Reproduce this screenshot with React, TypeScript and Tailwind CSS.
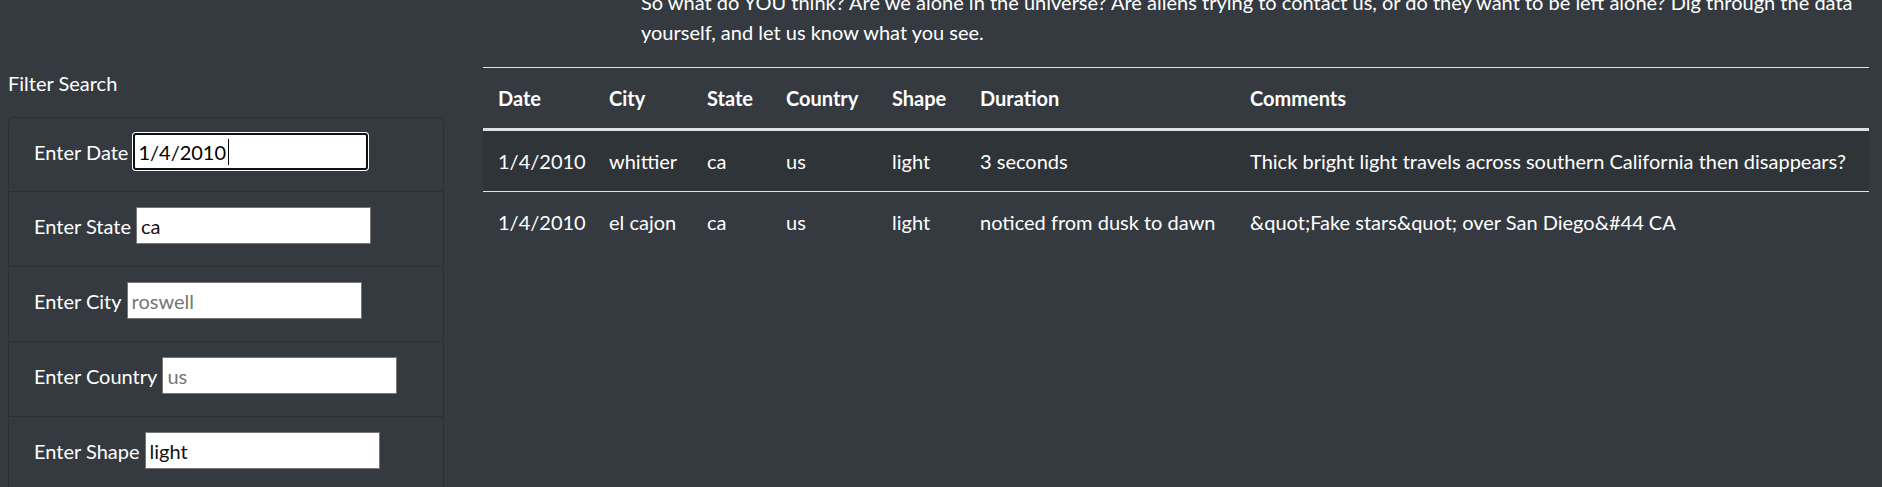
import React from "react";

const FONT = { fontFamily: "Lato, 'Noto Sans', sans-serif" };

type Field = { label: string; value?: string; placeholder?: string; focused?: boolean };

const fields: Field[] = [
  { label: "Enter Date", value: "1/4/2010", focused: true },
  { label: "Enter State", value: "ca" },
  { label: "Enter City", placeholder: "roswell" },
  { label: "Enter Country", placeholder: "us" },
  { label: "Enter Shape", value: "light" },
];

const rows = [
  ["1/4/2010", "whittier", "ca", "us", "light", "3 seconds", "Thick bright light travels across southern California then disappears?"],
  ["1/4/2010", "el cajon", "ca", "us", "light", "noticed from dusk to dawn", "&quot;Fake stars&quot; over San Diego&#44 CA"],
];

const headers = ["Date", "City", "State", "Country", "Shape", "Duration", "Comments"];
const widths = [111, 98, 79, 106, 88, 270, 634];

export default function App() {
  return (
    <div
      className="w-[1882px] h-[487px] overflow-hidden bg-[#343a40] text-white text-[20px] leading-[30px]"
      style={FONT}
    >
      <div className="flex">
        {/* Left column */}
        <div className="w-[483px] pl-[8px] pt-[68px]">
          <div className="h-[30px]">Filter Search</div>
          <div className="mt-[19px] w-[436px] border border-[#2b3035] rounded-[5px] divide-y divide-[#2b3035]">
            {fields.map((f) => (
              <div key={f.label} className="h-[75px] first:h-[74px] px-[25px] pt-[15px] flex items-start">
                <div className="flex items-center gap-[5px] h-[37px]">
                  <span className="whitespace-nowrap">{f.label}</span>
                  <div className="relative">
                    <input
                      readOnly
                      defaultValue={f.value}
                      placeholder={f.placeholder}
                      className={
                        f.focused
                          ? "block w-[235px] h-[37px] bg-white text-black border-2 border-[#101010] rounded-[3px] ring-1 ring-white px-[3px] text-[20px] outline-none placeholder:text-[#757575]"
                          : "block w-[235px] h-[37px] bg-white text-[#111] border border-[#767676] px-[4px] text-[20px] outline-none placeholder:text-[#757575]"
                      }
                      style={FONT}
                    />
                    {f.focused && (
                      <span className="absolute left-[95px] top-[6px] h-[26px] w-[1px] bg-black" />
                    )}
                  </div>
                </div>
              </div>
            ))}
          </div>
        </div>

        {/* Right column */}
        <div className="w-[1386px]">
          <p className="-mt-[13px] mb-[20px] ml-[158px] whitespace-nowrap">
            So what do YOU think? Are we alone in the universe? Are aliens trying to contact us, or do they want to be left alone? Dig through the data
            <br />
            yourself, and let us know what you see.
          </p>
          <table className="w-[1386px] table-fixed border-collapse">
            <colgroup>
              {widths.map((w, i) => (
                <col key={i} style={{ width: w }} />
              ))}
            </colgroup>
            <thead>
              <tr>
                {headers.map((h) => (
                  <th
                    key={h}
                    className="text-left font-bold px-[15px] py-[15px] border-t border-t-[#dee2e6] border-b-[3px] border-b-[#dee2e6] whitespace-nowrap"
                  >
                    {h}
                  </th>
                ))}
              </tr>
            </thead>
            <tbody>
              {rows.map((r, ri) => (
                <tr key={ri} className={ri === 0 ? "bg-[#2f3439]" : ""}>
                  {r.map((c, ci) => (
                    <td
                      key={ci}
                      className={
                        "px-[15px] py-[15px] whitespace-nowrap align-top " +
                        (ri === 0 ? "" : "border-t border-t-[#dee2e6]")
                      }
                    >
                      {c}
                    </td>
                  ))}
                </tr>
              ))}
            </tbody>
          </table>
        </div>
      </div>
    </div>
  );
}
